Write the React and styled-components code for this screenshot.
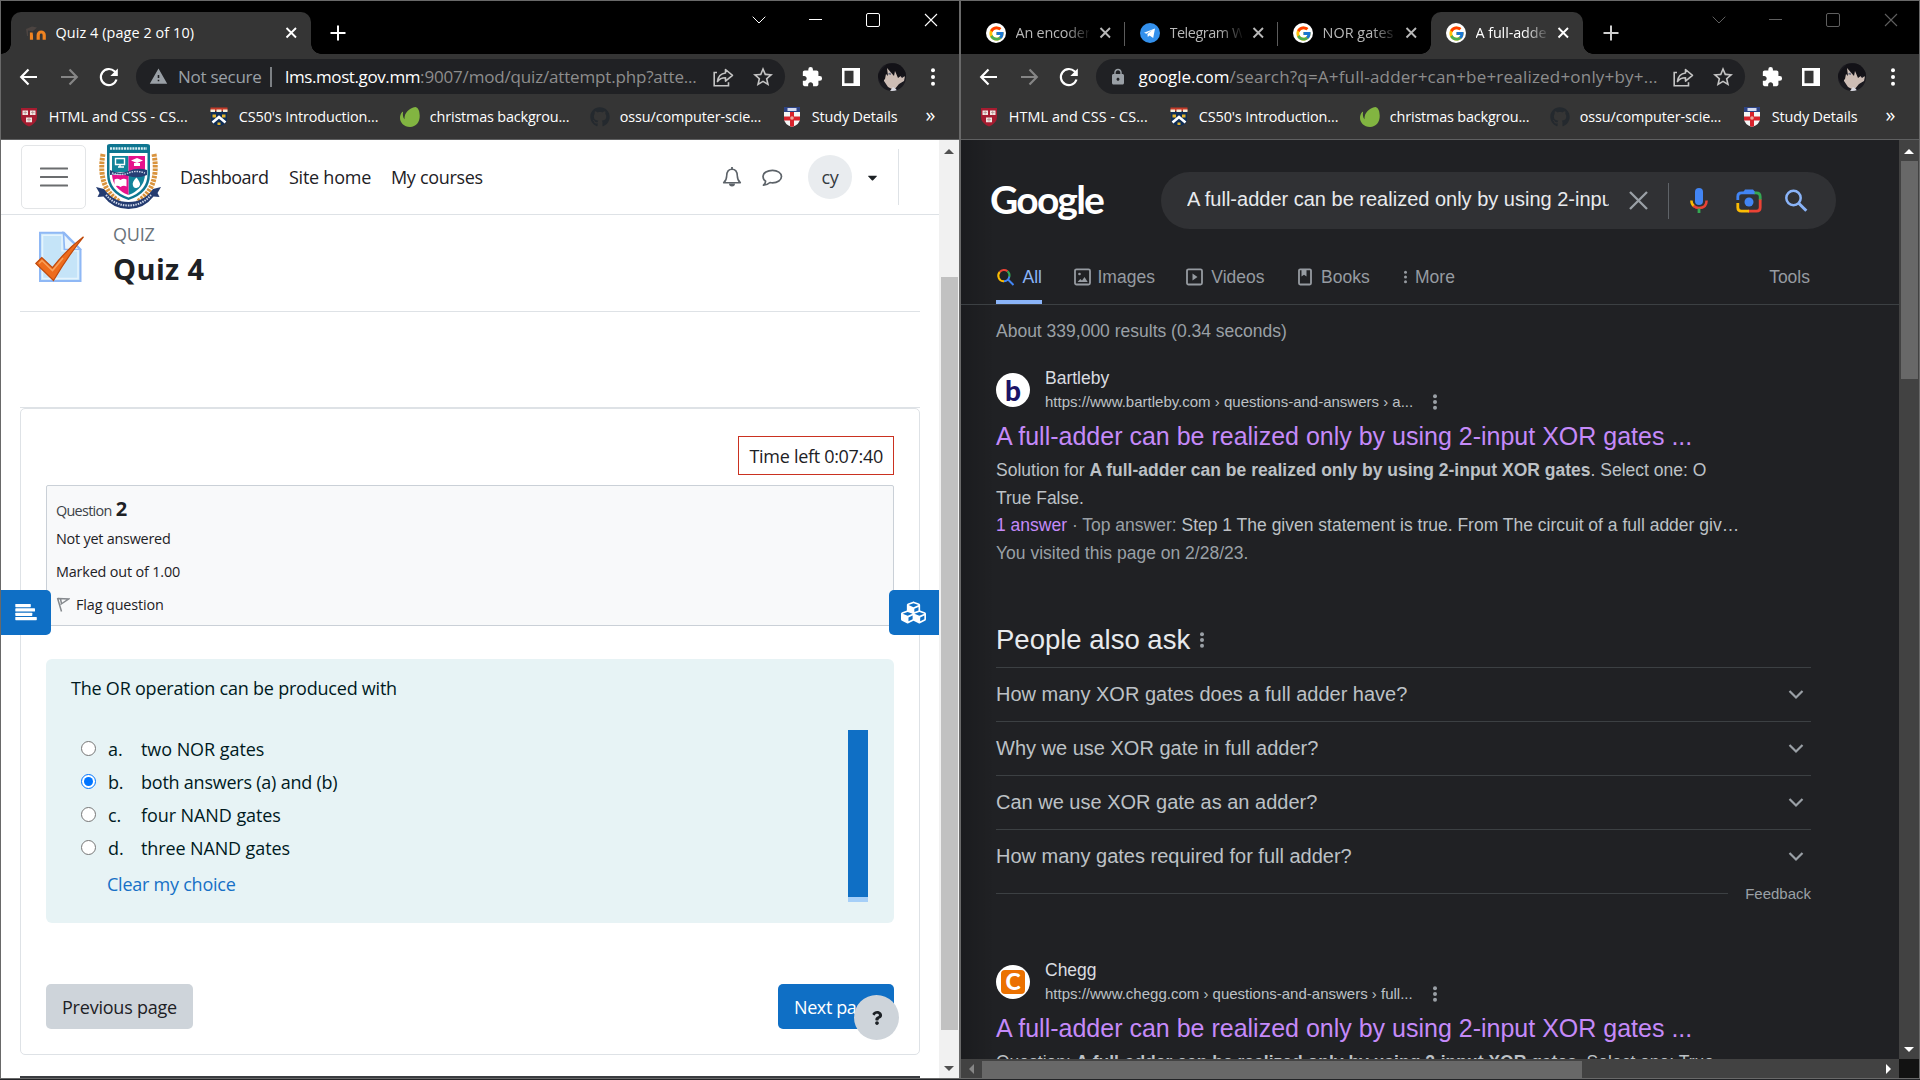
import React from "react";
import styled, { createGlobalStyle, css } from "styled-components";
import { FaCubes, FaQuestion, FaGithub, FaCaretDown } from "react-icons/fa";
import { FcGoogle } from "react-icons/fc";
import { MdExtension, MdWarning, MdLock, MdStarBorder } from "react-icons/md";

const UI = `"Open Sans", "Noto Sans", sans-serif`;
const ARIAL = `"Liberation Sans", Arial, sans-serif`;

const GlobalStyle = createGlobalStyle`
  *, *::before, *::after { box-sizing: border-box; }
  body { margin: 0; background: #222326; overflow: hidden; }
  svg { display: block; flex: none; }
`;

/* ---------- windows ---------- */
const Desktop = styled.div`
  display: flex;
  width: 1920px;
  height: 1080px;
  background: #222326;
  font-family: ${UI};
`;
const Window = styled.section`
  display: flex;
  flex-direction: column;
  width: 960px;
  height: 1079px;
  border: 1px solid #696969;
  background: #000;
  overflow: hidden;
`;

/* ---------- tab strip ---------- */
const TabStrip = styled.div`
  display: flex;
  flex: none;
  height: 53px;
  padding-left: 10px;
  background: #000;
`;
const Tabs = styled.div`
  display: flex;
  align-items: flex-end;
`;
const Tab = styled.div`
  position: relative;
  display: flex;
  align-items: center;
  width: ${(p) => p.$width}px;
  height: 42px;
  padding: 0 12px 0 15px;
  border-radius: 10px 10px 0 0;
  background: ${(p) => (p.$active ? "#353535" : "transparent")};
  color: ${(p) => (p.$active ? "#fff" : "#b8b8b8")};
  ${(p) =>
    p.$active &&
    css`
      &::before,
      &::after {
        content: "";
        position: absolute;
        bottom: 0;
        width: 10px;
        height: 10px;
      }
      &::before {
        left: -10px;
        background: radial-gradient(circle at 0 0, transparent 9.5px, #353535 10px);
      }
      &::after {
        right: -10px;
        background: radial-gradient(circle at 100% 0, transparent 9.5px, #353535 10px);
      }
    `}
`;
const TabSeparator = styled.i`
  align-self: center;
  width: 1px;
  height: 24px;
  margin: 13px 0 0 -1px;
  background: #5c5c5c;
`;
const Favicon = styled.span`
  display: flex;
  align-items: center;
  justify-content: center;
  flex: none;
  width: 20px;
  height: 20px;
  border-radius: 50%;
  background: ${(p) => p.$bg || "transparent"};
`;
const TabTitle = styled.span`
  flex: 1;
  margin: 0 8px 0 9.5px;
  overflow: hidden;
  white-space: nowrap;
  font-size: 14.4px;
  line-height: 24px;
  letter-spacing: ${(p) => p.$ls || 0}px;
  ${(p) => p.$fade && css`mask-image: linear-gradient(to right, #000 68%, transparent 104%);`}
`;
const NewTab = styled.span`
  align-self: center;
  display: flex;
  margin: 11px 0 0 ${(p) => p.$gap}px;
`;
const WindowControls = styled.div`
  display: grid;
  grid-template-columns: 56px 56px 60px 56px;
  justify-items: center;
  align-items: center;
  height: 37px;
  margin-left: auto;
  color: ${(p) => (p.$dim ? "#5f5f5f" : "#fff")};
`;

/* ---------- toolbar ---------- */
const Toolbar = styled.div`
  display: flex;
  align-items: center;
  flex: none;
  height: 45px;
  padding-left: 15.5px;
  background: #353535;
  color: #fff;
`;
const NavButtons = styled.div`
  display: flex;
  gap: 16px;
  margin-right: 15.5px;
`;
const AddressBar = styled.div`
  display: flex;
  align-items: center;
  width: 649px;
  height: 35px;
  padding: 0 10px 0 13px;
  border-radius: 18px;
  background: #202124;
  color: #9aa0a6;
  font-size: 17px;
  line-height: 30px;
`;
const SecureLabel = styled.span`
  width: 92px;
  margin-left: 10px;
  letter-spacing: -0.27px;
  white-space: nowrap;
`;
const AddressDivider = styled.i`
  width: 2px;
  height: 20px;
  margin-right: 3px;
  background: #7c8084;
`;
const Url = styled.span`
  flex: 1;
  margin-left: ${(p) => p.$gap}px;
  white-space: nowrap;
  letter-spacing: ${(p) => p.$ls}px;
  color: #8d8d8d;
`;
const Host = styled.span`
  letter-spacing: ${(p) => p.$ls}px;
  color: #fff;
`;
const AddressActions = styled.div`
  display: flex;
  gap: 16px;
  color: #c4c4c4;
`;
const Extensions = styled.div`
  display: grid;
  grid-template-columns: 24px 24px 28px 24px;
  column-gap: 15px;
  align-items: center;
  justify-items: center;
  margin-left: 15px;
`;

/* ---------- bookmarks ---------- */
const Bookmarks = styled.div`
  display: grid;
  grid-template-columns: 190px 191px 190px 192px 130px 48px;
  flex: none;
  height: 41px;
  padding: 0 0 5px 18px;
  border-bottom: 1px solid #5f6061;
  background: #353535;
  color: #fff;
  font-size: 14.4px;
`;
const Bookmark = styled.div`
  display: flex;
  align-items: center;
  gap: 9.8px;
  white-space: nowrap;
  letter-spacing: ${(p) => p.$ls}px;
`;
const BookmarkLabel = styled.span`
  margin-top: -1px;
`;
const Overflow = styled.div`
  display: flex;
  align-items: center;
  padding: 0 0 5px 13.5px;
  font-size: 20px;
`;

/* ---------- scrollbars ---------- */
const Scrollbar = styled.div`
  display: flex;
  flex-direction: ${(p) => (p.$horizontal ? "row" : "column")};
  align-items: center;
  justify-content: space-between;
  background: ${(p) => p.$track};
`;
const ScrollThumb = styled.div`
  background: ${(p) => p.$color};
  ${(p) =>
    p.$horizontal
      ? css`width: ${p.$length}px; height: 17px; margin: 1px auto 0 ${p.$offset}px;`
      : css`height: ${p.$length}px; width: 17px; margin: ${p.$offset}px 0 auto 1px;`}
`;
const ScrollArrow = styled.span`
  display: flex;
  align-items: center;
  justify-content: center;
  flex: none;
  width: ${(p) => (p.$horizontal ? 21 : 19)}px;
  height: ${(p) => (p.$horizontal ? 19 : 21)}px;
  ${(p) => !p.$horizontal && css`padding-top: 2px;`}
`;

/* ---------- moodle page ---------- */
const MoodleViewport = styled.div`
  position: relative;
  display: grid;
  grid-template-columns: 938px 20px;
  grid-template-rows: minmax(0, 1fr);
  flex: 1;
  min-height: 0;
  background: #fff;
  color: #1d2125;
`;
const MoodlePage = styled.div`
  display: flex;
  flex-direction: column;
  font-size: 18px;
`;
const Navbar = styled.nav`
  display: flex;
  align-items: center;
  flex: none;
  height: 75px;
  padding: 0 40px 0 20px;
  border-bottom: 1px solid #dee2e6;
`;
const MenuButton = styled.button`
  display: flex;
  align-items: center;
  justify-content: center;
  width: 65px;
  height: 64px;
  margin: 0 10px 0 0;
  padding: 0;
  border: 1px solid #e3e5e7;
  border-radius: 5px;
  background: #fff;
`;
const NavLinks = styled.div`
  display: grid;
  grid-template-columns: 109px 102px auto;
  margin-left: 19px;
`;
const NavLink = styled.span`
  letter-spacing: ${(p) => p.$ls}px;
  white-space: nowrap;
`;
const UserArea = styled.div`
  display: flex;
  align-items: center;
  margin-left: auto;
  color: #5d6369;
`;
const BellSlot = styled.span`
  margin-right: 16px;
`;
const Initials = styled.span`
  width: 44px;
  height: 44px;
  margin: 0 12.500px 0 24px;
  border-radius: 50%;
  background: #e9ecef;
  color: #343a40;
  line-height: 45px;
  text-align: center;
  letter-spacing: -0.3px;
`;
const NavDivider = styled.i`
  width: 1px;
  height: 56px;
  margin-left: 18.500px;
  background: #dee2e6;
`;
const PageHeader = styled.header`
  display: flex;
  flex: none;
  height: 97px;
  margin: 0 19px;
  padding: 0 0 0 15px;
  border-bottom: 1px solid #dee2e6;
`;
const QuizIcon = styled.div`
  margin-top: 16px;
`;
const HeaderText = styled.div`
  margin: 7px 0 0 28px;
`;
const Kicker = styled.div`
  color: #6a737b;
  line-height: 24px;
  letter-spacing: -0.24px;
`;
const PageTitle = styled.h1`
  margin: 3px 0 0;
  font-size: 29px;
  line-height: 40px;
  letter-spacing: 0.37px;
`;
const RegionRule = styled.div`
  flex: none;
  height: 1px;
  margin: 95px 19px 0;
  background: #dee2e6;
`;
const Card = styled.main`
  display: flex;
  flex-direction: column;
  flex: none;
  height: 647px;
  margin: 0 19px;
  padding: 27px 25px 0;
  border: 1px solid #dee2e6;
  border-radius: 5px;
`;
const Timer = styled.div`
  align-self: flex-end;
  width: 156px;
  height: 39px;
  padding-left: 10.500px;
  border: 1px solid #ca3120;
  line-height: 38px;
  letter-spacing: -0.3px;
`;
const QuestionInfo = styled.div`
  height: 141px;
  margin-top: 10px;
  padding: 8px 0 0 9px;
  border: 1px solid #cad0d7;
  border-radius: 2px;
  background: #f8f9fa;
  font-size: 14.4px;
`;
const QuestionNo = styled.div`
  height: 30px;
  line-height: 30px;
  color: #3d4348;
  letter-spacing: -0.7px;
`;
const Number = styled.b`
  margin-left: 1px;
  font-size: 20px;
  color: #1d2125;
`;
const InfoLine = styled.div`
  display: flex;
  align-items: center;
  gap: 6px;
  height: ${(p) => p.$h}px;
  letter-spacing: ${(p) => p.$ls}px;
`;
const Formulation = styled.div`
  height: 264px;
  margin-top: 33px;
  padding: 16px 26px 0 25px;
  border-radius: 6px;
  background: #e7f3f5;
  color: #001a1e;
`;
const QuestionText = styled.div`
  line-height: 26px;
  letter-spacing: -0.22px;
`;
const AnswerArea = styled.div`
  display: flex;
  justify-content: space-between;
  margin-top: 29px;
`;
const Options = styled.div`
  padding-top: 2px;
`;
const Option = styled.label`
  display: grid;
  grid-template-columns: 27px 33px auto;
  align-items: center;
  height: 33px;
  padding-left: 10px;
  letter-spacing: ${(p) => p.$ls}px;
`;
const Radio = styled.i`
  display: flex;
  align-items: center;
  justify-content: center;
  width: 15px;
  height: 15px;
  margin-top: -1px;
  border: 1.4px solid ${(p) => (p.$on ? "#0075ff" : "#767676")};
  border-radius: 50%;
  background: #fff;
  &::after {
    content: "";
    width: 9px;
    height: 9px;
    border-radius: 50%;
    background: ${(p) => (p.$on ? "#0075ff" : "transparent")};
  }
`;
const ClearChoice = styled.a`
  display: block;
  padding-left: 36px;
  color: #1670c6;
  line-height: 41px;
  letter-spacing: -0.24px;
`;
const AnswerMarker = styled.div`
  width: 20px;
  height: 172px;
  border-bottom: 5px solid #a6cff8;
  background: #0f6fc5;
`;
const PagerRow = styled.div`
  display: flex;
  justify-content: space-between;
  margin-top: 61px;
`;
const PagerButton = styled.button`
  width: ${(p) => p.$width}px;
  height: 45px;
  padding: 0 0 0 16px;
  border: 0;
  border-radius: 5px;
  background: ${(p) => (p.$primary ? "#0f6fc5" : "#ced4da")};
  color: ${(p) => (p.$primary ? "#fff" : "#1d2125")};
  font: 18px ${UI};
  letter-spacing: ${(p) => p.$ls}px;
  text-align: left;
  white-space: nowrap;
`;
const FooterBar = styled.footer`
  flex: none;
  height: 3px;
  margin: 21px 19px 0;
  background: #3a3c40;
`;
const DrawerToggle = styled.button`
  position: absolute;
  top: 450px;
  ${(p) => (p.$side === "left" ? "left: 0;" : "right: 20px;")}
  display: flex;
  align-items: center;
  width: 50px;
  height: 45px;
  padding: 0 0 0 ${(p) => (p.$side === "left" ? 14 : 12)}px;
  border: 0;
  border-radius: ${(p) => (p.$side === "left" ? "0 5px 5px 0" : "5px 0 0 5px")};
  background: #0f6fc5;
  color: #fff;
`;
const HelpButton = styled.button`
  position: absolute;
  top: 855px;
  left: 853px;
  display: flex;
  align-items: center;
  justify-content: center;
  width: 45px;
  height: 45px;
  padding: 1px 0 0;
  border: 0;
  border-radius: 50%;
  background: #ced4da;
  color: #1d2125;
`;

/* ---------- search page ---------- */
const SearchViewport = styled.div`
  display: grid;
  grid-template-columns: 938px 20px;
  grid-template-rows: 919px 19px;
  flex: 1;
  min-height: 0;
  background: #202124;
`;
const SearchPage = styled.div`
  overflow: hidden;
  background: linear-gradient(to right, rgba(0, 0, 0, 0.16), transparent 34px) #202124;
  font-family: ${ARIAL};
  font-size: 17.5px;
  color: #bdc1c6;
`;
const SearchHeader = styled.header`
  display: flex;
  height: 89px;
  padding: 32px 0 0 29px;
`;
const Wordmark = styled.div`
  width: 171px;
  padding-top: 2px;
  color: #fff;
  font: 700 39px/50px Lato, sans-serif;
  letter-spacing: -1.8px;
`;
const SearchBox = styled.div`
  display: flex;
  align-items: center;
  width: 675px;
  height: 57px;
  padding-left: 26px;
  border-radius: 29px;
  background: #303134;
`;
const Query = styled.div`
  width: 422px;
  margin-bottom: 3px;
  overflow: hidden;
  white-space: nowrap;
  font-size: 20px;
  line-height: 30px;
  color: #e8eaed;
`;
const SearchActions = styled.div`
  display: grid;
  grid-template-columns: 20px 1px 28px 28px 24px;
  column-gap: 19.500px;
  align-items: center;
  justify-items: center;
  margin-left: 19.500px;
`;
const BoxDivider = styled.i`
  width: 1px;
  height: 36px;
  background: #5f6368;
`;
const MicSlot = styled.span`
  margin: 0 7px 0 0;
`;
const LensSlot = styled.span`
  margin-right: 2px;
`;
const FilterBar = styled.nav`
  display: grid;
  grid-template-columns: 78px 112px 111px 106px 1fr auto;
  height: 55px;
  margin-top: 21px;
  padding: 0 89px 0 35px;
  border-bottom: 1px solid #3c4043;
  color: #969ba1;
`;
const Filter = styled.span`
  display: flex;
  align-items: center;
  justify-self: start;
  gap: ${(p) => p.$gap ?? 7}px;
  ${(p) => p.$active && css`color: #8ab4f8; width: 46px; box-shadow: inset 0 -4px #8ab4f8;`}
`;
const Results = styled.div`
  width: 850px;
  padding-left: 35px;
`;
const Stats = styled.div`
  margin-top: 13px;
  line-height: 26px;
  color: #9aa0a6;
`;
const Result = styled.article`
  margin-top: ${(p) => p.$top}px;
`;
const Source = styled.div`
  display: flex;
  align-items: center;
  height: 48px;
`;
const SiteIcon = styled.span`
  display: flex;
  align-items: center;
  justify-content: center;
  width: 34px;
  height: 34px;
  margin-right: 15px;
  border-radius: 50%;
  background: #fff;
  color: #1a1466;
  font: 900 28px/34px Lato, sans-serif;
`;
const CheggTile = styled.span`
  width: 24px;
  height: 24px;
  border-radius: 4px;
  background: #eb7100;
  color: #fff;
  font: 900 23px/23px Lato, sans-serif;
  text-align: center;
`;
const SiteName = styled.div`
  color: #dadce0;
  line-height: 24px;
`;
const SiteUrl = styled.div`
  display: flex;
  align-items: center;
  gap: 19px;
  font-size: 15px;
  line-height: 24px;
`;
const ResultTitle = styled.h3`
  margin: 5px 0 4px;
  color: #c58af9;
  font-size: 25px;
  font-weight: 400;
  line-height: 34px;
`;
const Snippet = styled.div`
  line-height: 27.5px;
  white-space: nowrap;
`;
const Muted = styled.span`
  color: #9aa0a6;
`;
const Visited = styled.span`
  color: #c58af9;
`;
const AskHeading = styled.h2`
  display: flex;
  align-items: center;
  gap: 8.500px;
  margin: 55px 0 9px;
  color: #e8eaed;
  font-size: 27.5px;
  font-weight: 400;
  line-height: 36px;
`;
const AskRow = styled.div`
  display: flex;
  align-items: center;
  justify-content: space-between;
  height: 54px;
  padding-right: 7px;
  border-top: 1px solid #3c4043;
  font-size: 20px;
`;
const FeedbackRow = styled.div`
  display: flex;
  align-items: center;
  gap: 17px;
  height: 20px;
  margin-bottom: 55px;
  color: #9aa0a6;
  font-size: 15px;
  &::before {
    content: "";
    flex: 1;
    height: 1px;
    background: #3c4043;
  }
`;
const ScrollCorner = styled.div`
  background: #121212;
`;

/* ---------- icons ---------- */
const Cross = ({ size, width, color = "currentColor" }) => (
  <svg width={size} height={size} viewBox={`0 0 ${size} ${size}`}>
    <path d={`M1 1L${size - 1} ${size - 1}M${size - 1} 1L1 ${size - 1}`} stroke={color} strokeWidth={width} />
  </svg>
);
const CloseTab = () => (
  <svg width="16" height="16" viewBox="0 0 16 16">
    <path d="M3.500 3l9.500 9.500M13 3L3.500 12.500" stroke="currentColor" strokeWidth="1.9" />
  </svg>
);
const Plus = ({ color }) => (
  <svg width="16" height="16" viewBox="0 0 16 16">
    <path d="M8 .5v15M.5 8h15" stroke={color} strokeWidth="2" />
  </svg>
);
const ChevronThin = () => (
  <svg width="14" height="8" viewBox="0 0 14 8">
    <path d="M.7.7L7 7L13.300 .7" fill="none" stroke="currentColor" strokeWidth="1" />
  </svg>
);
const MoodleIcon = () => (
  <svg width="20" height="20" viewBox="0 0 20 20">
    <path d="M5.500 16.800V9.500M12.200 16.800v-4.800a3 3 0 0 1 6 0V16.800" fill="none" stroke="#f08421" strokeWidth="3.200" />
    <path d="M6.500 8.500h3v8.300h-2z" fill="#353535" />
    <path d="M0 6l6-2.500 5 1-4.500 4L2 7.500V13H1z" fill="#4c4441" />
  </svg>
);
const TelegramIcon = () => (
  <svg width="20" height="20" viewBox="0 0 20 20">
    <circle cx="10" cy="10" r="10" fill="#3390ec" />
    <path d="M4 9.800L15 5.400L13.200 15l-3.700-2.600-1.700 1.600-.4-3 5-4-6 3.700z" fill="#fff" />
  </svg>
);
const BackIcon = ({ flip, color }) => (
  <svg width="24" height="24" viewBox="0 0 24 24" transform={flip ? "scale(-1 1)" : undefined}>
    <path d="M20 12H5M11.500 4.500L4.200 12l7.300 7.500" fill="none" stroke={color} strokeWidth="2.200" />
  </svg>
);
const ReloadIcon = () => (
  <svg width="24" height="24" viewBox="0 0 24 24">
    <path d="M19.500 14.500A8 8 0 1 1 17.500 6.300L19 7.800" fill="none" stroke="#fff" strokeWidth="2.200" />
    <path d="M20.800 3.500V11h-7.500z" fill="#fff" />
  </svg>
);
const ShareIcon = () => (
  <svg width="24" height="24" viewBox="0 0 24 24" fill="none" stroke="currentColor" strokeWidth="1.600">
    <path d="M6 7.500H3.200v13.300H17.500v-3.500" />
    <path d="M14.500 4.500l7 5.800-7 5.800v-3.400c-3.500 0-6 1-8 3.800 .5-4.500 3.500-8 8-8.500z" strokeLinejoin="round" />
  </svg>
);
const SidePanelIcon = () => (
  <svg width="18" height="18" viewBox="0 0 18 18">
    <path fillRule="evenodd" fill="#fff" d="M0 0h18v18H0zM2.500 2.800h9v12.500H2.500z" />
  </svg>
);
const ProfilePic = () => (
  <svg width="28" height="28" viewBox="0 0 28 28">
    <clipPath id="face"><circle cx="14" cy="14" r="14" /></clipPath>
    <g clipPath="url(#face)">
      <rect width="28" height="28" fill="#1b1a20" />
      <path d="M8 6l4-3 8 7 4 5 3-2-1 5-5 3-5 6-6-3-4-6-.5-6z" fill="#cdbdb5" />
      <path d="M9 1l12-1 7 8v6l-4-2-4 3-3-7-1 5-7-8 1 8-2-2-1 5-4 4-4-8z" fill="#131217" />
      <path d="M9.500 11l3-1.500.5 2.500z" fill="#5a6278" />
      <path d="M12 28l3-4 3 2 1 2z" fill="#dcdce4" />
    </g>
  </svg>
);
const Dots = ({ color, r, gap, size = 20 }) => (
  <svg width={r * 2 + 2} height={size} viewBox={`0 0 ${r * 2 + 2} ${size}`} fill={color}>
    {[-gap, 0, gap].map((d) => (
      <circle key={d} cx={r + 1} cy={size / 2 + d} r={r} />
    ))}
  </svg>
);
const HarvardIcon = () => (
  <svg width="20" height="20" viewBox="0 0 20 20">
    <path d="M2 1h16v9q0 6-8 9.500Q2 16 2 10z" fill="#a51c30" />
    <path d="M3.500 3.500h5.500v4.500H3.500zM11 3.500h5.500v4.500H11zM7 10.500h6v4.800H7z" fill="#f2e6e2" />
    <path d="M6.200 3.500v4M13.700 3.500v4M10 10.500v4M4.500 5.500h3.500M12 5.500h3.500M8 12.700h4" stroke="#a88" strokeWidth=".7" />
  </svg>
);
const YaleIcon = () => (
  <svg width="20" height="20" viewBox="0 0 20 20">
    <path d="M2 5h16v8q0 4-8 6.500Q2 17 2 13z" fill="#0e2d57" />
    <path d="M1.500 .5h17v3.500h-17z" fill="#c53a28" />
    <path d="M1.500 2.500h4.500V5H1.500zM7.500 2.500h5V5h-5zM14 2.500h4.500V5H14z" fill="#f4ecd8" />
    <path d="M3.500 15.500L10 10L16.500 15.500" fill="none" stroke="#fff" strokeWidth="2.600" />
    <path d="M3.500 7.500h3.500v3H3.500zM13 7.500h3.500v3H13zM8.500 15.500h3v2.500h-3z" fill="#e2b32c" />
  </svg>
);
const LeafIcon = () => (
  <svg width="20" height="20" viewBox="0 0 20 20">
    <path d="M15.500 0c3 1 4 4 4.200 8.500C20 15 16 20 10 20S0 15.500 0 11c0-2.500.7-4.500 2.200-6 .6-.5 1 0 .8.600-.5 2.600.2 5.200 1.500 6.700C4 6 9 1 15.500 0z" fill="#82b541" />
  </svg>
);
const LondonIcon = () => (
  <svg width="20" height="20" viewBox="0 0 20 20">
    <path d="M2 0h16v12q0 5-8 8-8-3-8-8z" fill="#f5f5f5" />
    <path d="M2 0h16v5H2z" fill="#2d4385" />
    <path d="M5.500 1h9v3h-9z" fill="#d6dcf0" />
    <path d="M8 5h4v14l-2 1-2-1zM2 9.500h16v4H2z" fill="#d8222c" />
    <circle cx="10" cy="11" r="1.800" fill="#f0a59c" />
  </svg>
);
const Triangle = ({ dir, color }) => {
  const d = { up: "M0 5L5 0l5 5z", down: "M0 0h10L5 5z", left: "M5 0v10L0 5z", right: "M0 0l5 5-5 5z" }[dir];
  const tall = dir === "left" || dir === "right";
  return (
    <svg width={tall ? 5 : 10} height={tall ? 10 : 5}>
      <path d={d} fill={color} />
    </svg>
  );
};
const MenuLines = () => (
  <svg width="28" height="22" viewBox="0 0 28 22">
    <path d="M.8 2.500h26.500M.8 11h26.500M.8 19.500h26.500" stroke="#6b6d6f" strokeWidth="2.100" strokeLinecap="round" />
  </svg>
);
const Crest = () => (
  <svg width="65" height="66" viewBox="0 0 65 66">
    <path d="M7 10Q1 44 24 58M58 10Q64 44 41 58" fill="none" stroke="#d9933d" strokeWidth="5" strokeDasharray="2.600 1" />
    <path d="M11 2q0-2 3-2h37q3 0 3 2v8H11z" fill="#0d7590" />
    <path d="M14 4.500h37" stroke="#d7edf2" strokeWidth="2.500" strokeDasharray="2 .8" />
    <path d="M11 9h43v21q0 19-21.500 26Q11 49 11 30z" fill="#0d7590" />
    <path d="M13.500 9h38v21q0 17-19 23.500Q13.500 47 13.500 30z" fill="#fff" />
    <path d="M16 12h16.500v16H16zM32.500 31H49q-1 14-16.500 20z" fill="#12839a" />
    <path d="M32.500 12H49v16H32.500zM16 31h16.500v20Q17 45 16 31z" fill="#e6128b" />
    <path d="M14 26q9 5 18.500 1T51 26v5q-9 4-18.500 1T14 31z" fill="#263f75" />
    <path d="M16 29q9 3 16.500 0T49 29" fill="none" stroke="#c7d2e6" strokeWidth="1.500" strokeDasharray="1.500 1" />
    <path d="M19.500 14.500h9v6h-9zM22 23h6M24 20v3" fill="none" stroke="#fff" strokeWidth="1.400" />
    <path d="M35 16.500l6-2.500 6 2.500-6 2.500zM38 19v3h6v-3" fill="#fff" />
    <path d="M18.500 35.500q3-1.500 6 .5 3-2 6-.5v7q-3-1.500-6 .5-3-2-6-.5z" fill="#fff" />
    <path d="M40.500 33.500q4 5 3.500 7.500t-3.500 3-3.700-3 3.700-7.500z" fill="#fff" />
    <path d="M0 43l8 2q9 13 24.500 13T57 45l8-2-3.500 6 2 4-6-.5Q48 65 32.500 65T7.500 52.500l-6 .5 2-4z" fill="#243b70" />
    <path d="M10 51q9 10.500 22.500 10.500T55 51" fill="none" stroke="#cdd6e8" strokeWidth="2" strokeDasharray="1.500 1" />
  </svg>
);
const BellIcon = () => (
  <svg width="24" height="24" viewBox="0 0 24 24">
    <path d="M12 4.200c-4 0-5.200 3-5.300 6.500-.1 3.800-1.200 5.500-3 7h16.600c-1.800-1.500-2.900-3.200-3-7C17.200 7.200 16 4.200 12 4.200z" fill="none" stroke="currentColor" strokeWidth="1.600" strokeLinejoin="round" />
    <path d="M9 18.500h6a3 3 0 0 1-6 0z" fill="currentColor" />
    <path d="M12 2v2.500" stroke="currentColor" strokeWidth="1.800" />
  </svg>
);
const ChatIcon = () => (
  <svg width="24" height="24" viewBox="0 0 24 24">
    <path d="M12.500 5.300c5 0 9 2.700 9 6.200s-4 6.300-9 6.300c-.9 0-1.700-.1-2.500-.3-1.800 1.700-3.800 2.700-6.500 2.700 1.300-1.200 2-2.300 2.100-4C4 15.100 3 13.500 3 11.500c0-3.500 4.500-6.200 9.500-6.200z" fill="none" stroke="currentColor" strokeWidth="1.700" strokeLinejoin="round" />
  </svg>
);
const QuizGlyph = () => (
  <svg width="50" height="52" viewBox="0 0 50 52">
    <path d="M5 1.800h24l16.500 16.500V50H5z" fill="#c5e4f8" stroke="#8fb8f5" strokeWidth="2" />
    <path d="M7.500 4.300H27v15.500h16V47.500H7.500z" fill="none" stroke="#e5f4fd" strokeWidth="1.500" />
    <path d="M28.500 2l1 16.500 15.500-.3L34 8z" fill="#e8f4fd" stroke="#8fb8f5" strokeWidth="1.600" />
    <path d="M.8 32.500l6-6 10.700 10.200Q31 19 48.500 5.800 33 25 18.500 49.500z" fill="#ee6c1c" stroke="#c04a0c" strokeWidth="1.200" />
    <path d="M4 32.500l3-3 10.500 10L28 27" fill="none" stroke="#f9a05a" strokeWidth="1.600" />
  </svg>
);
const FlagIcon = () => (
  <svg width="14" height="15" viewBox="0 0 14 15" fill="none" stroke="#85898d" strokeWidth="1.500">
    <path d="M1.500 1l4 13.500M1.800 1.500L12.500 2 4.500 7.500M4.500 2l1 4.500" />
  </svg>
);
const IndexIcon = () => (
  <svg width="22" height="17" viewBox="0 0 22 17" fill="#fff">
    <rect x=".3" width="15.500" height="3.200" rx=".6" />
    <rect x=".3" y="4.300" width="19.700" height="3.200" rx=".6" />
    <rect x=".3" y="8.700" width="17" height="3.200" rx=".6" />
    <rect x=".3" y="13" width="21.500" height="3.200" rx=".6" />
  </svg>
);
const MicIcon = () => (
  <svg width="28" height="28" viewBox="0 0 28 28" fill="none">
    <rect x="10" y="1" width="8" height="17" rx="4" fill="#4285f4" />
    <path d="M6.400 13.500q0 4 3 6" stroke="#fbbc04" strokeWidth="2.500" />
    <path d="M8.500 18.800q2.500 2.200 5.500 2.200 7.600 0 7.600-7.500" stroke="#ea4335" strokeWidth="2.500" />
    <path d="M14 21.500V26" stroke="#34a853" strokeWidth="2.800" />
  </svg>
);
const LensIcon = () => (
  <svg width="28" height="28" viewBox="0 0 28 28" fill="none" strokeWidth="2.800">
    <circle cx="14" cy="15" r="4.500" fill="#4285f4" />
    <path d="M2.800 13V9.500q0-3.700 3.700-3.700H20" stroke="#4285f4" />
    <path d="M8 5.500l2-3h8l2.500 3z" fill="#4285f4" />
    <path d="M19.500 5.800h1.700q4 0 4 4V13" stroke="#34a853" />
    <path d="M25.200 12.500v8q0 3.700-3.700 3.700H13" stroke="#ea4335" />
    <path d="M2.800 16v4.500q0 3.700 3.700 3.700H14" stroke="#fbbc04" />
  </svg>
);
const SearchIcon = () => (
  <svg width="24" height="24" viewBox="0 0 24 24" fill="none" stroke="#8ab4f8" strokeWidth="2.500">
    <circle cx="9.500" cy="9" r="7.200" />
    <path d="M14.500 14l7.800 7.800" strokeWidth="3" />
  </svg>
);
const AllIcon = () => (
  <svg width="18" height="18" viewBox="0 0 18 18" fill="none" strokeWidth="2">
    <path d="M3.700 4A5.600 5.600 0 0 1 11.500 3.200" stroke="#ea4335" />
    <path d="M11.500 3.200A5.600 5.600 0 0 1 13.300 9" stroke="#34a853" />
    <path d="M13.300 8.500A5.600 5.600 0 0 1 7.500 13.300M12 11.500l5.500 5.500" stroke="#4285f4" />
    <path d="M3.700 4A5.600 5.600 0 0 0 8 13.300" stroke="#fbbc04" />
  </svg>
);
const ImagesIcon = () => (
  <svg width="17" height="18" viewBox="0 0 17 18">
    <rect x="1" y="1.300" width="15" height="15.200" rx="1.500" fill="none" stroke="currentColor" strokeWidth="1.800" />
    <path d="M3.500 14l2.800-3 1.700 1.500 2.500-3.500 3.200 5z" fill="currentColor" />
    <circle cx="5.500" cy="6" r="1.300" fill="currentColor" />
  </svg>
);
const VideosIcon = () => (
  <svg width="17" height="18" viewBox="0 0 17 18">
    <rect x="1" y="1.300" width="15" height="15.200" rx="1.500" fill="none" stroke="currentColor" strokeWidth="1.800" />
    <path d="M6.500 5.500l5 3.500-5 3.500z" fill="currentColor" />
  </svg>
);
const BooksIcon = () => (
  <svg width="16" height="18" viewBox="0 0 16 18">
    <rect x="2" y="1.300" width="12" height="15.200" rx="1.200" fill="none" stroke="currentColor" strokeWidth="1.800" />
    <path d="M4.500 2h5v6.500L7 6.700 4.500 8.500z" fill="currentColor" />
  </svg>
);
const ChevronDown = () => (
  <svg width="16" height="10" viewBox="0 0 16 10">
    <path d="M1.500 1L8 7.500l6.500-6.500" fill="none" stroke="#9aa0a6" strokeWidth="2.200" />
  </svg>
);

/* ---------- shared browser chrome ---------- */
const Controls = ({ dim }) => (
  <WindowControls $dim={dim}>
    <ChevronThin />
    <svg width="13" height="1"><path d="M0 .5h13" stroke="currentColor" /></svg>
    <svg width="14" height="14"><rect x=".5" y=".5" width="13" height="13" rx="1.500" fill="none" stroke="currentColor" /></svg>
    <Cross size={14} width={1.1} />
  </WindowControls>
);

const BrowserBar = ({ children }) => (
  <Toolbar>
    <NavButtons>
      <BackIcon color="#fff" />
      <BackIcon flip color="#858585" />
      <ReloadIcon />
    </NavButtons>
    <AddressBar>
      {children}
      <AddressActions>
        <ShareIcon />
        <MdStarBorder size={24} />
      </AddressActions>
    </AddressBar>
    <Extensions>
      <MdExtension size={22} />
      <SidePanelIcon />
      <ProfilePic />
      <Dots color="#fff" r={2} gap={6.7} />
    </Extensions>
  </Toolbar>
);

const BOOKMARKS = [
  { label: "HTML and CSS - CS...", ls: 0.08, icon: <HarvardIcon /> },
  { label: "CS50's Introduction...", ls: -0.1, icon: <YaleIcon /> },
  { label: "christmas backgrou...", ls: -0.16, icon: <LeafIcon /> },
  { label: "ossu/computer-scie...", ls: -0.1, icon: <FaGithub size={20} color="#24292e" /> },
  { label: "Study Details", ls: -0.14, icon: <LondonIcon /> },
];
const BookmarkBar = () => (
  <Bookmarks>
    {BOOKMARKS.map((b) => (
      <Bookmark key={b.label} $ls={b.ls}>
        {b.icon}
        <BookmarkLabel>{b.label}</BookmarkLabel>
      </Bookmark>
    ))}
    <Overflow>»</Overflow>
  </Bookmarks>
);

const GoogleFavicon = () => (
  <Favicon $bg="#fff"><FcGoogle size={17} /></Favicon>
);

/* ---------- left window ---------- */
const OPTIONS = [
  { key: "a.", label: "two NOR gates", ls: -0.06 },
  { key: "b.", label: "both answers (a) and (b)", ls: -0.23, on: true },
  { key: "c.", label: "four NAND gates", ls: -0.08 },
  { key: "d.", label: "three NAND gates", ls: -0.12 },
];

const QuizWindow = () => (
  <Window>
    <TabStrip>
      <Tabs>
        <Tab $width={300} $active>
          <Favicon><MoodleIcon /></Favicon>
          <TabTitle $ls={0.09}>Quiz 4 (page 2 of 10)</TabTitle>
          <CloseTab />
        </Tab>
      </Tabs>
      <NewTab $gap={19}><Plus color="#fff" /></NewTab>
      <Controls />
    </TabStrip>
    <BrowserBar>
      <MdWarning size={19} />
      <SecureLabel>Not secure</SecureLabel>
      <AddressDivider />
      <Url $gap={10} $ls={-0.17}>
        <Host $ls={-0.4}>lms.most.gov.mm</Host>:9007/mod/quiz/attempt.php?atte...
      </Url>
    </BrowserBar>
    <BookmarkBar />
    <MoodleViewport>
      <MoodlePage>
        <Navbar>
          <MenuButton><MenuLines /></MenuButton>
          <Crest />
          <NavLinks>
            <NavLink $ls={-0.5}>Dashboard</NavLink>
            <NavLink $ls={-0.25}>Site home</NavLink>
            <NavLink $ls={-0.32}>My courses</NavLink>
          </NavLinks>
          <UserArea>
            <BellSlot><BellIcon /></BellSlot>
            <ChatIcon />
            <Initials>cy</Initials>
            <FaCaretDown size={15} color="#1d2125" />
            <NavDivider />
          </UserArea>
        </Navbar>
        <PageHeader>
          <QuizIcon><QuizGlyph /></QuizIcon>
          <HeaderText>
            <Kicker>QUIZ</Kicker>
            <PageTitle>Quiz 4</PageTitle>
          </HeaderText>
        </PageHeader>
        <RegionRule />
        <Card>
          <Timer>Time left 0:07:40</Timer>
          <QuestionInfo>
            <QuestionNo>Question <Number>2</Number></QuestionNo>
            <InfoLine $h={29} $ls={-0.23}>Not yet answered</InfoLine>
            <InfoLine $h={37} $ls={-0.17}>Marked out of 1.00</InfoLine>
            <InfoLine $h={28} $ls={-0.13}><FlagIcon />Flag question</InfoLine>
          </QuestionInfo>
          <Formulation>
            <QuestionText>The OR operation can be produced with</QuestionText>
            <AnswerArea>
              <Options>
                {OPTIONS.map((o) => (
                  <Option key={o.key} $ls={o.ls}>
                    <Radio $on={o.on} />
                    <span>{o.key}</span>
                    <span>{o.label}</span>
                  </Option>
                ))}
                <ClearChoice>Clear my choice</ClearChoice>
              </Options>
              <AnswerMarker />
            </AnswerArea>
          </Formulation>
          <PagerRow>
            <PagerButton $width={147} $ls={-0.22}>Previous page</PagerButton>
            <PagerButton $width={116} $ls={-0.4} $primary>Next page</PagerButton>
          </PagerRow>
        </Card>
        <FooterBar />
      </MoodlePage>
      <Scrollbar $track="#f1f1f1">
        <ScrollArrow><Triangle dir="up" color="#505050" /></ScrollArrow>
        <ScrollThumb $color="#c1c1c1" $length={753} $offset={116} />
        <ScrollArrow><Triangle dir="down" color="#505050" /></ScrollArrow>
      </Scrollbar>
      <DrawerToggle $side="left"><IndexIcon /></DrawerToggle>
      <DrawerToggle $side="right"><FaCubes size={25} /></DrawerToggle>
      <HelpButton><FaQuestion size={14} /></HelpButton>
    </MoodleViewport>
  </Window>
);

/* ---------- right window ---------- */
const ASKED = [
  "How many XOR gates does a full adder have?",
  "Why we use XOR gate in full adder?",
  "Can we use XOR gate as an adder?",
  "How many gates required for full adder?",
];

const SourceLine = ({ icon, name, url }) => (
  <Source>
    <SiteIcon>{icon}</SiteIcon>
    <div>
      <SiteName>{name}</SiteName>
      <SiteUrl>{url}<Dots color="#9aa0a6" r={2} gap={5.8} /></SiteUrl>
    </div>
  </Source>
);

const SearchWindow = () => (
  <Window>
    <TabStrip>
      <Tabs>
        <Tab $width={154}><GoogleFavicon /><TabTitle $ls={-0.2} $fade>An encoder</TabTitle><CloseTab /></Tab>
        <TabSeparator />
        <Tab $width={153}><Favicon><TelegramIcon /></Favicon><TabTitle $ls={-0.45} $fade>Telegram W</TabTitle><CloseTab /></Tab>
        <TabSeparator />
        <Tab $width={153}><GoogleFavicon /><TabTitle $ls={0.05} $fade>NOR gates</TabTitle><CloseTab /></Tab>
        <Tab $width={152} $active><GoogleFavicon /><TabTitle $ls={-0.1} $fade>A full-adde</TabTitle><CloseTab /></Tab>
      </Tabs>
      <NewTab $gap={20}><Plus color="#cfcfcf" /></NewTab>
      <Controls dim />
    </TabStrip>
    <BrowserBar>
      <MdLock size={18} />
      <Url $gap={11.5} $ls={0.2}>
        <Host $ls={-0.03}>google.com</Host>/search?q=A+full-adder+can+be+realized+only+by+...
      </Url>
    </BrowserBar>
    <BookmarkBar />
    <SearchViewport>
      <SearchPage>
        <SearchHeader>
          <Wordmark>Google</Wordmark>
          <SearchBox>
            <Query>A full-adder can be realized only by using 2-input</Query>
            <SearchActions>
              <Cross size={19} width={2.3} color="#9aa0a6" />
              <BoxDivider />
              <MicSlot><MicIcon /></MicSlot>
              <LensSlot><LensIcon /></LensSlot>
              <SearchIcon />
            </SearchActions>
          </SearchBox>
        </SearchHeader>
        <FilterBar>
          <Filter $active $gap={8.5}><AllIcon />All</Filter>
          <Filter $gap={6.5}><ImagesIcon />Images</Filter>
          <Filter $gap={8.3}><VideosIcon />Videos</Filter>
          <Filter $gap={8}><BooksIcon />Books</Filter>
          <Filter><Dots color="#969ba1" r={1.5} gap={4.7} />More</Filter>
          <Filter>Tools</Filter>
        </FilterBar>
        <Results>
          <Stats>About 339,000 results (0.34 seconds)</Stats>
          <Result $top={22}>
            <SourceLine icon="b" name="Bartleby" url="https://www.bartleby.com › questions-and-answers › a..." />
            <ResultTitle>A full-adder can be realized only by using 2-input XOR gates ...</ResultTitle>
            <Snippet>
              <div>Solution for <b>A full-adder can be realized only by using 2-input XOR gates</b>. Select one: O</div>
              <div>True False.</div>
              <div>
                <Visited>1 answer</Visited>
                <Muted> · Top answer: </Muted>
                Step 1 The given statement is true. From The circuit of a full adder giv…
              </div>
              <Muted>You visited this page on 2/28/23.</Muted>
            </Snippet>
          </Result>
          <AskHeading>People also ask <Dots color="#9aa0a6" r={2} gap={5.7} /></AskHeading>
          {ASKED.map((q) => (
            <AskRow key={q}>{q}<ChevronDown /></AskRow>
          ))}
          <FeedbackRow>Feedback</FeedbackRow>
          <Result $top={0}>
            <SourceLine icon={<CheggTile>C</CheggTile>} name="Chegg" url="https://www.chegg.com › questions-and-answers › full..." />
            <ResultTitle>A full-adder can be realized only by using 2-input XOR gates ...</ResultTitle>
            <Snippet>
              Question: <b>A full-adder can be realized only by using 2-input XOR gates</b>. Select one: True
            </Snippet>
          </Result>
        </Results>
      </SearchPage>
      <Scrollbar $track="#424242">
        <ScrollArrow><Triangle dir="up" color="#fff" /></ScrollArrow>
        <ScrollThumb $color="#686868" $length={218} $offset={0} />
        <ScrollArrow><Triangle dir="down" color="#fff" /></ScrollArrow>
      </Scrollbar>
      <Scrollbar $track="#424242" $horizontal>
        <ScrollArrow $horizontal><Triangle dir="left" color="#868686" /></ScrollArrow>
        <ScrollThumb $horizontal $color="#686868" $length={600} $offset={0} />
        <ScrollArrow $horizontal><Triangle dir="right" color="#fff" /></ScrollArrow>
      </Scrollbar>
      <ScrollCorner />
    </SearchViewport>
  </Window>
);

export default function App() {
  return (
    <>
      <GlobalStyle />
      <Desktop>
        <QuizWindow />
        <SearchWindow />
      </Desktop>
    </>
  );
}
